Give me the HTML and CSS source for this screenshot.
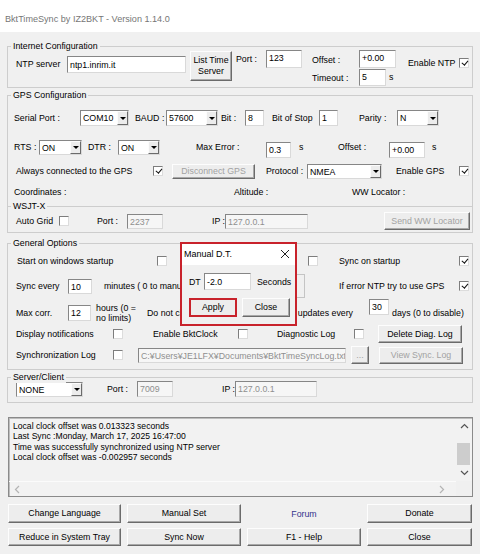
FILE: index.html
```html
<!DOCTYPE html>
<html lang="en">
<head>
<meta charset="utf-8">
<title>BktTimeSync</title>
<link rel="stylesheet" href="styles.css">
</head>
<body>
<div class="window">
  <header class="titlebar">BktTimeSync by IZ2BKT - Version 1.14.0</header>

  <main class="client">

    <!-- Internet Configuration -->
    <section class="group internet">
      <span class="legend">Internet Configuration</span>
      <div class="inet-row">
        <span class="lbl l-ntp">NTP server</span>
        <span class="field f-ntp">ntp1.inrim.it</span>
        <button class="btn b-list">List Time<br>Server</button>
        <span class="lbl l-iport">Port :</span>
        <span class="field f-iport">123</span>
        <div class="inet-stack">
          <div class="row r-off"><span class="lbl l-ioff">Offset :</span><span class="field f-ioff">+0.00</span></div>
          <div class="row r-tmo"><span class="lbl l-ioff">Timeout :</span><span class="field f-tmo">5</span><span class="lbl l-ts">s</span></div>
        </div>
        <span class="lbl l-entp">Enable NTP</span>
        <span class="chk on c-entp"></span>
      </div>
    </section>

    <!-- GPS Configuration -->
    <section class="group gps">
      <span class="legend">GPS Configuration</span>
      <div class="row g1">
        <span class="lbl l-serial">Serial Port :</span>
        <span class="combo c-com"><span class="cv">COM10</span><span class="drop"></span></span>
        <span class="lbl l-baud">BAUD :</span>
        <span class="combo c-baud"><span class="cv">57600</span><span class="drop"></span></span>
        <span class="lbl l-bit">Bit :</span>
        <span class="field f-bit">8</span>
        <span class="lbl l-stop">Bit of Stop</span>
        <span class="field f-stop">1</span>
        <span class="lbl l-parity">Parity :</span>
        <span class="combo c-parity"><span class="cv">N</span><span class="drop"></span></span>
      </div>
      <div class="row g2">
        <span class="lbl l-rts">RTS :</span>
        <span class="combo c-rts"><span class="cv">ON</span><span class="drop"></span></span>
        <span class="lbl l-dtr">DTR :</span>
        <span class="combo c-dtr"><span class="cv">ON</span><span class="drop"></span></span>
        <span class="lbl l-maxerr">Max Error :</span>
        <span class="field low f-maxerr">0.3</span>
        <span class="lbl l-s1">s</span>
        <span class="lbl l-goff">Offset :</span>
        <span class="field low f-goff">+0.00</span>
        <span class="lbl l-s2">s</span>
      </div>
      <div class="row g3">
        <span class="lbl l-always">Always connected to the GPS</span>
        <span class="chk on"></span>
        <button class="btn dis b-disc">Disconnect GPS</button>
        <span class="lbl l-proto">Protocol :</span>
        <span class="combo c-nmea"><span class="cv">NMEA</span><span class="drop"></span></span>
        <span class="lbl l-engps">Enable GPS</span>
        <span class="chk on"></span>
      </div>
      <div class="row g4">
        <span class="lbl l-coord">Coordinates :</span>
        <span class="lbl l-alt">Altitude :</span>
        <span class="lbl">WW Locator :</span>
      </div>
    </section>

    <!-- WSJT-X link -->
    <section class="group wsjtx">
      <span class="legend">WSJT-X</span>
      <div class="row w1">
        <span class="lbl l-auto">Auto Grid</span>
        <span class="chk"></span>
        <span class="lbl l-wport">Port :</span>
        <span class="field dis f-wport">2237</span>
        <span class="lbl l-wip">IP :</span>
        <span class="field dis f-wip">127.0.0.1</span>
        <button class="btn dis b-send">Send WW Locator</button>
      </div>
    </section>

    <!-- General Options -->
    <section class="group general">
      <span class="legend">General Options</span>
      <div class="row o1">
        <span class="lbl l-start">Start on windows startup</span>
        <span class="chk"></span>
        <span class="chk c-min"></span>
        <span class="lbl l-syncst">Sync on startup</span>
        <span class="chk on"></span>
      </div>
      <div class="row o2">
        <span class="lbl l-every">Sync every</span>
        <span class="field f-every">10</span>
        <span class="lbl l-min">minutes ( 0 to manual )</span>
        <span class="field f-extra"></span>
        <span class="lbl l-iferr">If error NTP try to use GPS</span>
        <span class="chk on"></span>
      </div>
      <div class="row o3">
        <span class="lbl l-every">Max corr.</span>
        <span class="field f-maxc">12</span>
        <span class="lbl l-hours">hours (0 =<br>no limits)</span>
        <span class="lbl l-upd"><span>Do not check for new</span><span>updates every</span></span>
        <span class="field f-days">30</span>
        <span class="lbl l-days">days (0 to disable)</span>
      </div>
      <div class="row o4">
        <span class="lbl l-disp">Display notifications</span>
        <span class="chk"></span>
        <span class="lbl l-ebc">Enable BktClock</span>
        <span class="chk"></span>
        <span class="lbl l-diag">Diagnostic Log</span>
        <span class="chk"></span>
        <button class="btn b-del">Delete Diag. Log</button>
      </div>
      <div class="row o5">
        <span class="lbl l-disp">Synchronization Log</span>
        <span class="chk"></span>
        <span class="field dis f-path">C:¥Users¥JE1LFX¥Documents¥BktTimeSyncLog.txt</span>
        <button class="btn dis b-dots">...</button>
        <button class="btn dis b-view">View Sync. Log</button>
      </div>
    </section>

    <!-- Server/Client -->
    <section class="group server">
      <span class="legend">Server/Client</span>
      <div class="row s1">
        <span class="combo c-none"><span class="cv">NONE</span><span class="drop"></span></span>
        <span class="lbl l-sport">Port :</span>
        <span class="field dis f-sport">7009</span>
        <span class="lbl l-sip">IP :</span>
        <span class="field dis f-sip">127.0.0.1</span>
      </div>
    </section>

    <!-- Log output -->
    <div class="log">
      <div class="log-text">
        <div>Local clock offset was 0.013323 seconds</div>
        <div>Last Sync :Monday, March 17, 2025 16:47:00</div>
        <div>Time was successfully synchronized using NTP server</div>
        <div>Local clock offset was -0.002957 seconds</div>
      </div>
      <div class="vscroll">
        <span class="arrow"><svg width="9" height="6" viewBox="0 0 9 6"><polyline points="1,5 4.5,1.5 8,5" fill="none" stroke="#555" stroke-width="1.2"/></svg></span>
        <span class="track"><span class="thumb"></span></span>
        <span class="arrow"><svg width="9" height="6" viewBox="0 0 9 6"><polyline points="1,1 4.5,4.5 8,1" fill="none" stroke="#555" stroke-width="1.2"/></svg></span>
      </div>
      <div class="hscroll">
        <svg width="6" height="9" viewBox="0 0 6 9"><polyline points="5,1 1.5,4.5 5,8" fill="none" stroke="#b4b4b4" stroke-width="1.2"/></svg>
        <svg width="6" height="9" viewBox="0 0 6 9"><polyline points="1,1 4.5,4.5 1,8" fill="none" stroke="#b4b4b4" stroke-width="1.2"/></svg>
      </div>
      <div class="corner"></div>
    </div>

    <!-- Command buttons -->
    <div class="commands">
      <button class="btn">Change Language</button>
      <button class="btn">Manual Set</button>
      <span class="forum">Forum</span>
      <button class="btn">Donate</button>
      <button class="btn">Reduce in System Tray</button>
      <button class="btn">Sync Now</button>
      <button class="btn">F1 - Help</button>
      <button class="btn">Close</button>
    </div>
  </main>

  <!-- Manual D.T. dialog -->
  <div class="dialog">
    <div class="dlg-title">
      <span>Manual D.T.</span>
      <svg class="dlg-x" width="10" height="10" viewBox="0 0 10 10"><path d="M1 1 L9 9 M9 1 L1 9" stroke="#222" stroke-width="1"/></svg>
    </div>
    <div class="row dlg-row">
      <span class="lbl l-dt">DT</span>
      <span class="field f-dt">-2.0</span>
      <span class="lbl l-sec">Seconds</span>
    </div>
    <div class="row dlg-btns">
      <button class="btn b-apply">Apply</button>
      <button class="btn b-dclose">Close</button>
    </div>
  </div>
</div>
</body>
</html>
```
FILE: styles.css
```css
* { box-sizing: border-box; }

html, body { margin: 0; padding: 0; }

body {
  width: 480px;
  height: 554px;
  overflow: hidden;
  background: #f0f0f0;
  color: #000;
  font-family: "Liberation Sans", Arial, sans-serif;
  font-size: 8.8px;
}

.window { position: relative; width: 480px; height: 554px; }

.titlebar {
  height: 32px;
  background: #fff;
  color: #767676;
  font-size: 9.1px;
  line-height: 12px;
  padding: 13px 0 0 5px;
}

.client { padding: 0 7px; }

/* ---------- group boxes ---------- */
.group {
  position: relative;
  border: 1px solid #cdcdcd;
  padding-left: 6px;
}
.legend {
  position: absolute;
  top: -7px;
  left: 3px;
  padding: 0 2px;
  line-height: 12px;
  background: #f0f0f0;
  white-space: nowrap;
}

.internet { margin-top: 14px; height: 42px; padding-top: 3px; }
.gps { margin-top: 7px; height: 111px; padding-top: 12px; border-bottom: 0; }
.wsjtx { height: 27px; padding-top: 5px; }
.general { margin-top: 10px; height: 127px; padding-top: 8px; }
.server { margin-top: 7px; height: 26px; padding-top: 2px; }

.row { display: flex; align-items: center; height: 18px; }

/* ---------- basic controls ---------- */
.lbl { flex: none; white-space: nowrap; line-height: 12px; }

.field {
  flex: none;
  display: block;
  height: 16px;
  background: #fff;
  border: 1px solid;
  border-color: #868686 #d9d9d9 #d9d9d9 #868686;
  padding: 1px 0 0 2px;
  line-height: 12px;
  overflow: hidden;
  white-space: nowrap;
}
.field.dis { background: #f6f6f6; color: #8f8f8f; }
.field.low { margin-top: 5px; }

.combo {
  flex: none;
  display: flex;
  height: 16px;
  background: #fff;
  border: 1px solid;
  border-color: #868686 #d9d9d9 #d9d9d9 #868686;
}
.combo .cv { flex: 1; padding-left: 2px; line-height: 14px; overflow: hidden; }
.combo .drop {
  flex: none;
  position: relative;
  width: 11px;
  background: #ececec;
  border: 1px solid;
  border-color: #fcfcfc #6b6b6b #6b6b6b #fcfcfc;
}
.combo .drop::after {
  content: "";
  position: absolute;
  left: 50%;
  top: 50%;
  margin: -1px 0 0 -3px;
  border-style: solid;
  border-width: 3px 3px 0 3px;
  border-color: #000 transparent transparent transparent;
}

.btn {
  flex: none;
  font: inherit;
  color: #000;
  background: #ededed;
  border: 1px solid;
  border-color: #fdfdfd #6b6b6b #6b6b6b #fdfdfd;
  box-shadow: inset -1px -1px 0 #a8a8a8;
  padding: 0;
  line-height: 11px;
  text-align: center;
  white-space: nowrap;
}
.btn.dis { color: #a2a2a2; }

.chk {
  flex: none;
  position: relative;
  width: 10px;
  height: 10px;
  background: #fff;
  border: 1px solid;
  border-color: #7d7d7d #dcdcdc #dcdcdc #7d7d7d;
}
.chk.on::after {
  content: "";
  position: absolute;
  left: 2.5px;
  top: 0;
  width: 2.5px;
  height: 5px;
  border: solid #111;
  border-width: 0 1.5px 1.5px 0;
  transform: rotate(40deg);
}

/* ---------- Internet Configuration ---------- */
.inet-row { display: flex; align-items: flex-start; height: 36px; }
.l-ntp { width: 51px; margin: 8px 0 0 2px; }
.f-ntp { width: 119px; height: 17px; margin-top: 6px; padding-top: 2px; }
.b-list { width: 42px; height: 30px; margin: 1px 0 0 4px; }
.l-iport { width: 30px; margin: 3px 0 0 4px; }
.f-iport { width: 36px; height: 18px; }
.inet-stack { width: 96px; margin-left: 10px; }
.inet-stack .row { align-items: flex-start; }
.r-off { height: 19px; }
.r-tmo { height: 17px; }
.l-ioff { width: 47px; margin-top: 4px; }
.r-tmo .l-ioff { margin-top: 3px; }
.f-ioff { width: 37px; height: 18px; }
.f-tmo { width: 27px; height: 17px; }
.l-ts { margin: 2px 0 0 3px; }
.l-entp { width: 51px; margin-top: 7px; }
.c-entp { margin-top: 8px; }

/* ---------- GPS Configuration ---------- */
.g1, .g2, .g3 { height: 20px; }
.g2 { margin-top: 9px; }
.g3 { margin-top: 4px; }
.g4 { height: 16px; margin-top: 3px; }

.l-serial { width: 66px; }
.c-com { width: 49px; }
.l-baud { width: 31px; margin-left: 6px; }
.c-baud { width: 52px; }
.l-bit { width: 24px; margin-left: 3px; }
.f-bit, .f-stop { width: 19px; }
.l-stop { width: 47px; margin-left: 8px; }
.l-parity { width: 38px; margin-left: 21px; }
.c-parity { width: 42px; }

.l-rts { width: 25px; }
.c-rts { width: 43px; height: 15px; }
.l-dtr { width: 30px; margin-left: 6px; }
.c-dtr { width: 42px; height: 15px; }
.l-maxerr { width: 70px; margin-left: 36px; }
.f-maxerr { width: 25px; }
.l-s1 { width: 39px; margin-left: 8px; }
.l-goff { width: 51px; }
.f-goff { width: 36px; }
.l-s2 { margin-left: 7px; }

.l-always { width: 137px; margin-left: 2px; }
.b-disc { width: 83px; height: 15px; margin-left: 9px; }
.l-proto { width: 41px; margin-left: 11px; }
.c-nmea { width: 75px; height: 15px; }
.l-engps { width: 63px; margin-left: 14px; }

.l-coord { width: 220px; }
.l-alt { width: 118px; }

/* ---------- WSJT-X ---------- */
.l-auto { width: 43px; margin-left: 2px; }
.l-wport { width: 30px; margin-left: 28px; }
.f-wport { width: 36px; height: 15px; }
.l-wip { width: 13px; margin-left: 49px; }
.f-wip { width: 83px; height: 15px; }
.b-send { width: 86px; height: 18px; margin-left: 76px; }

/* ---------- General Options ---------- */
.o2 { margin-top: 7px; }
.o3 { margin-top: 9px; }
.o4, .o5 { margin-top: 3px; }

.l-start { width: 140px; margin-left: 3px; }
.c-min { margin-left: 141px; }
.l-syncst { width: 120px; margin-left: 21px; }

.l-every { width: 52px; margin-left: 2px; }
.f-every { width: 24px; height: 15px; }
.l-min { width: 146px; margin-left: 12px; }
.f-extra { width: 55px; height: 24px; border-color: #c4c4c4; background: #f0f0f0; }
.l-iferr { width: 120px; margin-left: 34px; }

.f-maxc { width: 23px; }
.l-hours { width: 51px; margin-left: 5px; line-height: 10px; }
.l-upd { width: 222px; display: flex; justify-content: space-between; padding-right: 16px; }
.f-days { width: 20px; align-self: flex-start; margin-top: -5px; }
.l-days { margin-left: 3px; }

.l-disp { width: 97px; margin-left: 2px; }
.l-ebc { width: 85px; margin-left: 30px; }
.l-diag { width: 77px; margin-left: 29px; }
.b-del { width: 84px; height: 18px; margin-left: 14px; }

.f-path { width: 208px; height: 15px; margin-left: 15px; }
.b-dots { width: 18px; height: 18px; margin-left: 5px; }
.b-view { width: 84px; height: 17px; margin-left: 10px; }

/* ---------- Server/Client ---------- */
.c-none { width: 67px; height: 15px; margin-left: 2px; }
.l-sport { width: 30px; margin-left: 24px; }
.f-sport { width: 36px; }
.l-sip { width: 13px; margin-left: 49px; }
.f-sip { width: 82px; }

/* ---------- log box ---------- */
.log {
  margin: 14px 0 0 1px;
  height: 80px;
  border: 1px solid #8a8a8a;
  box-shadow: inset 1px 1px 0 #bdbdbd;
  background: #f2f2f2;
  display: grid;
  grid-template-columns: 1fr 16px;
  grid-template-rows: 1fr 15px;
}
.log-text {
  padding: 3px 0 0 4px;
  font-size: 8.6px;
  line-height: 10.4px;
  white-space: nowrap;
  overflow: hidden;
}
.vscroll { display: flex; flex-direction: column; }
.vscroll .arrow { height: 16px; display: flex; align-items: center; justify-content: center; }
.vscroll .track { flex: 1; }
.vscroll .thumb { display: block; width: 13px; height: 22px; margin: 9px 0 0 1px; background: #cdcdcd; }
.hscroll {
  display: flex;
  align-items: center;
  justify-content: space-between;
  padding: 0 11px 0 5px;
  border-top: 1px solid #fbfbfb;
}
.corner { background: #f0f0f0; }

/* ---------- command buttons ---------- */
.commands {
  display: grid;
  grid-template-columns: 113px 114px 114px 105px;
  grid-template-rows: 19px 18px;
  column-gap: 6px;
  row-gap: 5px;
  margin: 7px 0 0 1px;
}
.forum {
  display: flex;
  align-items: center;
  justify-content: center;
  color: #34348c;
}

/* ---------- Manual D.T. dialog ---------- */
.dialog {
  position: absolute;
  left: 180px;
  top: 242px;
  width: 117px;
  height: 84px;
  border: 2px solid #c8222b;
  background: #f0f0f0;
}
.dlg-title {
  height: 21px;
  background: #fff;
  display: flex;
  align-items: center;
  justify-content: space-between;
  padding: 0 5px 2px 2px;
  font-size: 9px;
}
.dlg-row { height: 17px; margin-top: 8px; }
.l-dt { width: 15px; margin-left: 7px; }
.f-dt { width: 47px; height: 17px; padding-top: 2px; }
.l-sec { margin-left: 6px; }
.dlg-btns { height: 19px; margin-top: 8px; }
.b-apply { width: 48px; height: 19px; margin-left: 7px; border: 2px solid #c8222b; box-shadow: none; }
.b-dclose { width: 48px; height: 19px; margin-left: 5px; }
```
